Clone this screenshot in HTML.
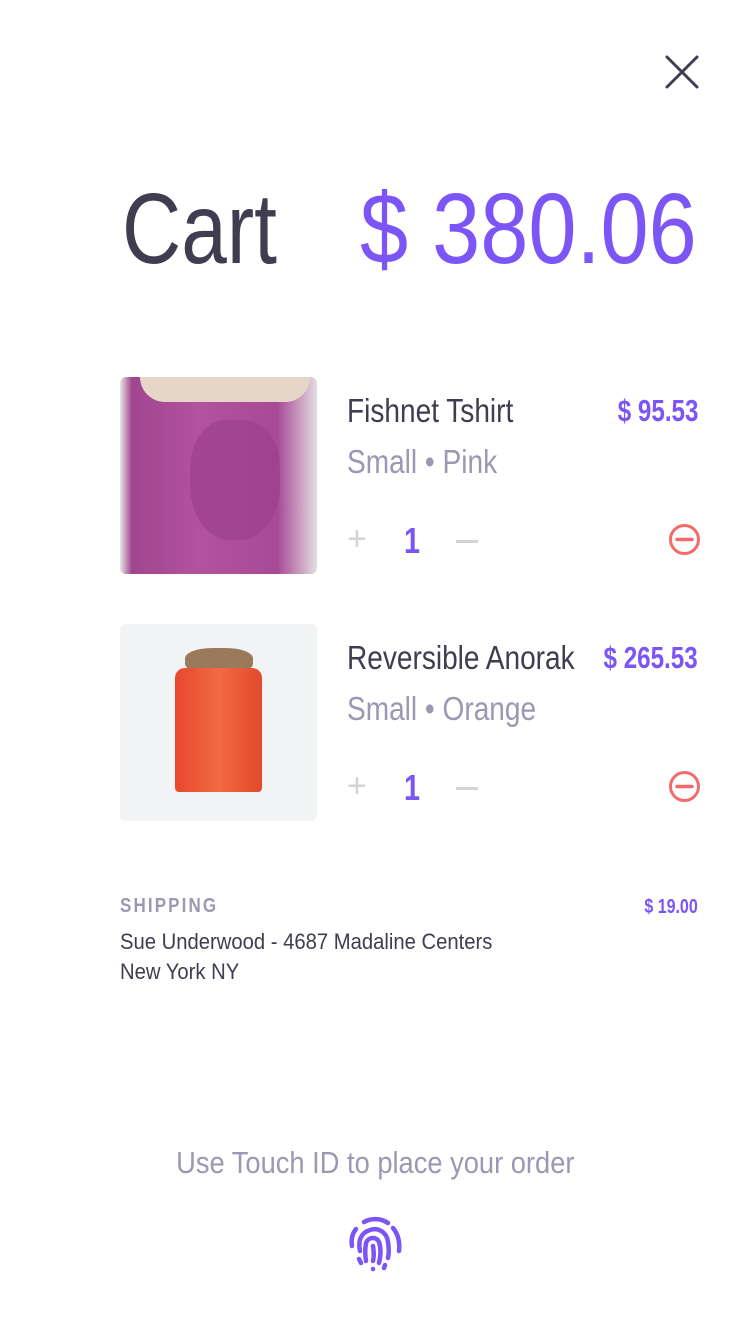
<!DOCTYPE html>
<html><head><meta charset="utf-8"><style>
body{margin:0;width:750px;height:1334px;background:#fff;font-family:"Liberation Sans",sans-serif;position:relative;overflow:hidden}
.a{position:absolute;white-space:nowrap;transform-origin:0 0}
.r{transform-origin:100% 0}
</style></head><body>
<svg class="a" style="left:664px;top:54px" width="36" height="36"><path d="M3 3L33 33M33 3L3 33" stroke="#3f3d4f" stroke-width="3" stroke-linecap="round"/></svg>
<div class="a" style="left:122px;top:172px;font-size:100px;color:#3f3d4f;transform:scaleX(.82)">Cart</div>
<div class="a" style="left:360px;top:172px;font-size:100px;color:#7b55f5;transform:scaleX(.865)">$ 380.06</div>

<div class="a" style="left:120px;top:377px;width:197px;height:197px;border-radius:6px;background:linear-gradient(90deg,#e9e6e6 0,#a0468f 6%,#b3529f 40%,#a74a96 80%,#e4dde0 100%)"></div>
<div class="a" style="left:140px;top:377px;width:170px;height:25px;background:#e5d6c8;border-radius:0 0 40px 40px"></div>
<div class="a" style="left:190px;top:420px;width:90px;height:120px;border-radius:40% 40% 45% 45%;background:#9a3e8c;opacity:.6"></div>

<div class="a" style="left:120px;top:624px;width:197px;height:197px;border-radius:6px;background:#f2f3f5"></div>
<div class="a" style="left:185px;top:648px;width:68px;height:26px;border-radius:40%;background:#9b7a5c"></div>
<div class="a" style="left:175px;top:668px;width:87px;height:124px;border-radius:10px 10px 4px 4px;background:linear-gradient(90deg,#e7482c,#f26a43,#e24a2c)"></div>

<div class="a" style="left:347px;top:392px;font-size:33px;color:#3f3d4f;transform:scaleX(.85)">Fishnet Tshirt</div>
<div class="a r" style="right:52px;top:393px;font-size:31px;font-weight:bold;color:#7b55f5;transform:scaleX(.78)">$ 95.53</div>
<div class="a" style="left:347px;top:443px;font-size:33px;color:#9a98b3;transform:scaleX(.85)">Small • Pink</div>
<div class="a" style="left:347px;top:520px;font-size:34px;color:#d3d3d8">+</div>
<div class="a" style="left:404px;top:520px;font-size:36px;font-weight:bold;color:#7b55f5;transform:scaleX(.8)">1</div>
<div class="a" style="left:456px;top:540px;width:22px;height:3px;background:#d3d3d8"></div>
<svg class="a" style="left:668px;top:523px" width="33" height="33"><circle cx="16.5" cy="16.5" r="14" fill="none" stroke="#f26a6a" stroke-width="3"/><path d="M9 16.5H24" stroke="#f26a6a" stroke-width="3.5" stroke-linecap="round"/></svg>

<div class="a" style="left:347px;top:639px;font-size:33px;color:#3f3d4f;transform:scaleX(.85)">Reversible Anorak</div>
<div class="a r" style="right:52px;top:640px;font-size:31px;font-weight:bold;color:#7b55f5;transform:scaleX(.78)">$ 265.53</div>
<div class="a" style="left:347px;top:690px;font-size:33px;color:#9a98b3;transform:scaleX(.85)">Small • Orange</div>
<div class="a" style="left:347px;top:767px;font-size:34px;color:#d3d3d8">+</div>
<div class="a" style="left:404px;top:767px;font-size:36px;font-weight:bold;color:#7b55f5;transform:scaleX(.8)">1</div>
<div class="a" style="left:456px;top:787px;width:22px;height:3px;background:#d3d3d8"></div>
<svg class="a" style="left:668px;top:770px" width="33" height="33"><circle cx="16.5" cy="16.5" r="14" fill="none" stroke="#f26a6a" stroke-width="3"/><path d="M9 16.5H24" stroke="#f26a6a" stroke-width="3.5" stroke-linecap="round"/></svg>

<div class="a" style="left:120px;top:895px;font-size:20px;font-weight:bold;letter-spacing:2.5px;color:#9a98b3;transform:scaleX(.85)">SHIPPING</div>
<div class="a r" style="right:52px;top:896px;font-size:20px;font-weight:bold;color:#7b55f5;transform:scaleX(.8)">$ 19.00</div>
<div class="a" style="left:120px;top:929px;font-size:22px;color:#3f3d4f;transform:scaleX(.92)">Sue Underwood - 4687 Madaline Centers</div>
<div class="a" style="left:120px;top:959px;font-size:22px;color:#3f3d4f;transform:scaleX(.92)">New York NY</div>

<div class="a" style="left:0;width:750px;text-align:center;top:1145px;font-size:31px;color:#9a98b3"><span style="display:inline-block;transform:scaleX(.88)">Use Touch ID to place your order</span></div>
<svg class="a" style="left:346px;top:1215px" width="58" height="58" viewBox="0 0 58 58" fill="none" stroke="#7b55f5" stroke-width="4.5" stroke-linecap="round">
<path d="M18 7C25 3 35 3 42 8"/><path d="M47 13C52 19 54 27 53 36"/><path d="M10 14C6 19 5 25 6 31"/><path d="M14 36C12 27 14 18 24 15C33 12 41 18 42 27C43 33 43 38 42 43"/><path d="M20 46C19 40 19 34 20 28C22 22 30 21 33 27C35 33 35 40 33 48"/><path d="M27 31C28 37 28 42 27 46"/><path d="M13 44L15 48"/><path d="M27 54L27 54"/><path d="M39 50L38 53"/>
</svg>
</body></html>
